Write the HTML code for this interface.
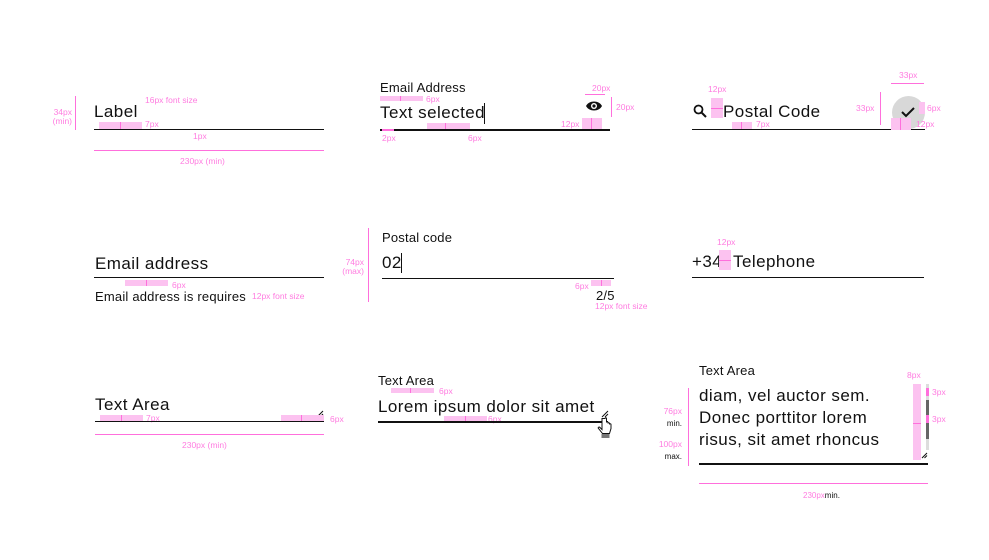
<!DOCTYPE html>
<html><head><meta charset="utf-8"><style>
*{margin:0;padding:0;box-sizing:border-box}
body{width:989px;height:560px;background:#fff;position:relative;overflow:hidden;font-family:"Liberation Sans",sans-serif;color:#111}
.a{position:absolute;white-space:nowrap}
.t{font-size:17px;line-height:20px;letter-spacing:0.45px}
.l{font-size:13px;line-height:15px;letter-spacing:0.2px}
.p{color:#ff7ce0;font-size:8.5px;line-height:9px}
.pl{background:#ff6fdc}
.pr{background:#fcc2f0}
.bk{background:#111}
</style></head><body>

<!-- Column 1 row 1 -->
<div class="a pl" style="left:75px;top:96px;width:1px;height:34px"></div>
<div class="a p" style="left:46px;top:108px;text-align:right;width:26px">34px<br>(min)</div>
<div class="a t" style="left:94px;top:102px">Label</div>
<div class="a p" style="left:145px;top:96px">16px font size</div>
<div class="a pr" style="left:99px;top:122px;width:43px;height:7px"></div>
<div class="a pl" style="left:120px;top:122px;width:1px;height:7px"></div>
<div class="a p" style="left:145px;top:120px">7px</div>
<div class="a bk" style="left:94px;top:129px;width:230px;height:1px"></div>
<div class="a p" style="left:193px;top:132px">1px</div>
<div class="a pl" style="left:94px;top:150px;width:230px;height:1px"></div>
<div class="a p" style="left:180px;top:157px">230px (min)</div>

<!-- Column 2 row 1 -->
<div class="a l" style="left:380px;top:80px">Email Address</div>
<div class="a pr" style="left:380px;top:96px;width:43px;height:5px"></div>
<div class="a pl" style="left:400px;top:96px;width:1px;height:5px"></div>
<div class="a p" style="left:426px;top:95px">6px</div>
<div class="a t" style="left:380px;top:103px">Text selected</div>
<div class="a bk" style="left:484px;top:103px;width:1px;height:21px"></div>
<svg class="a" style="left:585px;top:99px" width="18" height="14" viewBox="0 0 18 14"><path d="M1 7C4 1 14 1 17 7C14 13 4 13 1 7Z" fill="#111"/><circle cx="9" cy="7" r="3" fill="#fff"/><circle cx="9" cy="7" r="1.6" fill="#111"/></svg>
<div class="a pl" style="left:585px;top:94px;width:20px;height:1px"></div>
<div class="a p" style="left:592px;top:84px">20px</div>
<div class="a pl" style="left:611px;top:97px;width:1px;height:20px"></div>
<div class="a p" style="left:616px;top:103px">20px</div>
<div class="a pr" style="left:427px;top:123px;width:43px;height:6px"></div>
<div class="a pl" style="left:445px;top:123px;width:1px;height:6px"></div>
<div class="a pr" style="left:582px;top:118px;width:20px;height:12px"></div>
<div class="a pl" style="left:591px;top:118px;width:1px;height:12px"></div>
<div class="a p" style="left:561px;top:120px">12px</div>
<div class="a bk" style="left:380px;top:129px;width:230px;height:2px"></div>
<div class="a pl" style="left:382px;top:129px;width:12px;height:2px"></div>
<div class="a p" style="left:382px;top:134px">2px</div>
<div class="a p" style="left:468px;top:134px">6px</div>

<!-- Column 3 row 1 -->
<svg class="a" style="left:693px;top:104px" width="14" height="14" viewBox="0 0 14 14"><circle cx="5.5" cy="5.5" r="4" fill="none" stroke="#111" stroke-width="1.8"/><path d="M8.5 8.5L13 13" stroke="#111" stroke-width="2"/></svg>
<div class="a pr" style="left:711px;top:98px;width:12px;height:20px"></div>
<div class="a pl" style="left:711px;top:108px;width:12px;height:1px"></div>
<div class="a p" style="left:708px;top:85px">12px</div>
<div class="a t" style="left:723px;top:102px">Postal Code</div>
<div class="a pr" style="left:732px;top:122px;width:20px;height:7px"></div>
<div class="a pl" style="left:741px;top:122px;width:1px;height:7px"></div>
<div class="a p" style="left:756px;top:120px">7px</div>
<div class="a bk" style="left:692px;top:129px;width:233px;height:1px"></div>
<div class="a pl" style="left:891px;top:83px;width:33px;height:1px"></div>
<div class="a p" style="left:899px;top:71px">33px</div>
<div class="a pl" style="left:880px;top:92px;width:1px;height:33px"></div>
<div class="a p" style="left:856px;top:104px">33px</div>
<div class="a" style="left:892px;top:96px;width:33px;height:33px;border-radius:50%;background:#d8d8d8"></div>
<svg class="a" style="left:900px;top:106px" width="16" height="12" viewBox="0 0 16 12"><path d="M2 6L6 10L14 2" fill="none" stroke="#111" stroke-width="2"/></svg>
<div class="a pr" style="left:891px;top:118px;width:20px;height:12px"></div>
<div class="a pl" style="left:900px;top:118px;width:1px;height:12px"></div>
<div class="a p" style="left:916px;top:120px">12px</div>
<div class="a pr" style="left:919px;top:102px;width:6px;height:12px"></div>
<div class="a p" style="left:927px;top:104px">6px</div>

<!-- Row 2 col 1 -->
<div class="a t" style="left:95px;top:254px">Email address</div>
<div class="a bk" style="left:94px;top:277px;width:230px;height:1px"></div>
<div class="a pr" style="left:125px;top:280px;width:43px;height:6px"></div>
<div class="a pl" style="left:146px;top:280px;width:1px;height:6px"></div>
<div class="a p" style="left:172px;top:281px">6px</div>
<div class="a l" style="left:95px;top:289px">Email address is requires</div>
<div class="a p" style="left:252px;top:292px">12px font size</div>

<!-- Row 2 col 2 -->
<div class="a pl" style="left:368px;top:228px;width:1px;height:74px"></div>
<div class="a p" style="left:334px;top:258px;text-align:right;width:30px">74px<br>(max)</div>
<div class="a l" style="left:382px;top:230px">Postal code</div>
<div class="a t" style="left:382px;top:253px">02</div>
<div class="a bk" style="left:401px;top:253px;width:1px;height:20px"></div>
<div class="a bk" style="left:382px;top:278px;width:232px;height:1px"></div>
<div class="a pr" style="left:591px;top:280px;width:20px;height:6px"></div>
<div class="a pl" style="left:601px;top:280px;width:1px;height:6px"></div>
<div class="a p" style="left:575px;top:282px">6px</div>
<div class="a l" style="left:596px;top:288px">2/5</div>
<div class="a p" style="left:595px;top:302px">12px font size</div>

<!-- Row 2 col 3 -->
<div class="a t" style="left:692px;top:252px">+34</div>
<div class="a pr" style="left:719px;top:250px;width:12px;height:20px"></div>
<div class="a pl" style="left:719px;top:260px;width:12px;height:1px"></div>
<div class="a p" style="left:717px;top:238px">12px</div>
<div class="a t" style="left:733px;top:252px">Telephone</div>
<div class="a bk" style="left:692px;top:277px;width:232px;height:1px"></div>

<!-- Row 3 col 1 -->
<div class="a t" style="left:95px;top:395px">Text Area</div>
<svg class="a" style="left:316px;top:410px" width="8" height="8"><path d="M1 7L7 1M4 7L7 4" stroke="#111" stroke-width="1"/></svg>
<div class="a pr" style="left:100px;top:415px;width:43px;height:6px"></div>
<div class="a pl" style="left:121px;top:415px;width:1px;height:6px"></div>
<div class="a p" style="left:146px;top:414px">7px</div>
<div class="a pr" style="left:281px;top:415px;width:43px;height:6px"></div>
<div class="a pl" style="left:301px;top:415px;width:1px;height:6px"></div>
<div class="a p" style="left:330px;top:415px">6px</div>
<div class="a bk" style="left:95px;top:421px;width:229px;height:1px"></div>
<div class="a pl" style="left:95px;top:434px;width:229px;height:1px"></div>
<div class="a p" style="left:182px;top:441px">230px (min)</div>

<!-- Row 3 col 2 -->
<div class="a l" style="left:378px;top:373px">Text Area</div>
<div class="a pr" style="left:391px;top:388px;width:43px;height:5px"></div>
<div class="a pl" style="left:410px;top:388px;width:1px;height:5px"></div>
<div class="a p" style="left:439px;top:387px">6px</div>
<div class="a t" style="left:378px;top:397px">Lorem ipsum dolor sit amet</div>
<svg class="a" style="left:601px;top:410px" width="8" height="8"><path d="M1 7L7 1M4 7L7 4" stroke="#111" stroke-width="1"/></svg>
<div class="a pr" style="left:444px;top:416px;width:43px;height:5px"></div>
<div class="a pl" style="left:465px;top:416px;width:1px;height:5px"></div>
<div class="a p" style="left:488px;top:415px">6px</div>
<div class="a bk" style="left:378px;top:421px;width:230px;height:2px"></div>
<svg class="a" style="left:597px;top:417px" width="16" height="22" viewBox="0 0 16 22"><path d="M5 1.5v11l-2-2c-1-1-2.5 0-1.5 1l4 5h7l1.5-5v-4c0-1-1.5-1-1.5 0v-1c0-1-1.5-1-1.5 0v-1c0-1-1.5-1-1.5 0V1.5c0-1-1.5-1-1.5 0Z" fill="#fff" stroke="#111" stroke-width="1"/><rect x="4.5" y="17" width="8" height="4" fill="#777"/></svg>

<!-- Row 3 col 3 -->
<div class="a l" style="left:699px;top:363px">Text Area</div>
<div class="a pl" style="left:688px;top:388px;width:1px;height:78px"></div>
<div class="a p" style="left:653px;top:407px;text-align:right;width:29px">76px</div>
<div class="a" style="left:653px;top:419px;width:29px;text-align:right;font-size:8px">min.</div>
<div class="a p" style="left:653px;top:440px;text-align:right;width:29px">100px</div>
<div class="a" style="left:653px;top:452px;width:29px;text-align:right;font-size:8px">max.</div>
<div class="a t" style="left:699px;top:385px;line-height:22px">diam, vel auctor sem.<br>Donec porttitor lorem<br>risus, sit amet rhoncus</div>
<div class="a p" style="left:907px;top:371px">8px</div>
<div class="a pr" style="left:913px;top:384px;width:8px;height:76px"></div>
<div class="a pl" style="left:913px;top:423px;width:8px;height:1px"></div>
<div class="a" style="left:926px;top:384px;width:3px;height:66px;background:#ddd"></div>
<div class="a" style="left:926px;top:400px;width:3px;height:39px;background:#666"></div>
<div class="a pl" style="left:926px;top:388px;width:3px;height:8px"></div>
<div class="a pl" style="left:926px;top:415px;width:3px;height:8px"></div>
<div class="a p" style="left:932px;top:388px">3px</div>
<div class="a p" style="left:932px;top:415px">3px</div>
<svg class="a" style="left:921px;top:452px" width="7" height="7"><path d="M1 6L6 1M3.5 6L6 3.5" stroke="#111" stroke-width="1"/></svg>
<div class="a bk" style="left:699px;top:463px;width:229px;height:2px"></div>
<div class="a pl" style="left:699px;top:483px;width:229px;height:1px"></div>
<div class="a" style="left:803px;top:491px;font-size:8px"><span style="color:#ff7ce0">230px</span>min.</div>

</body></html>
